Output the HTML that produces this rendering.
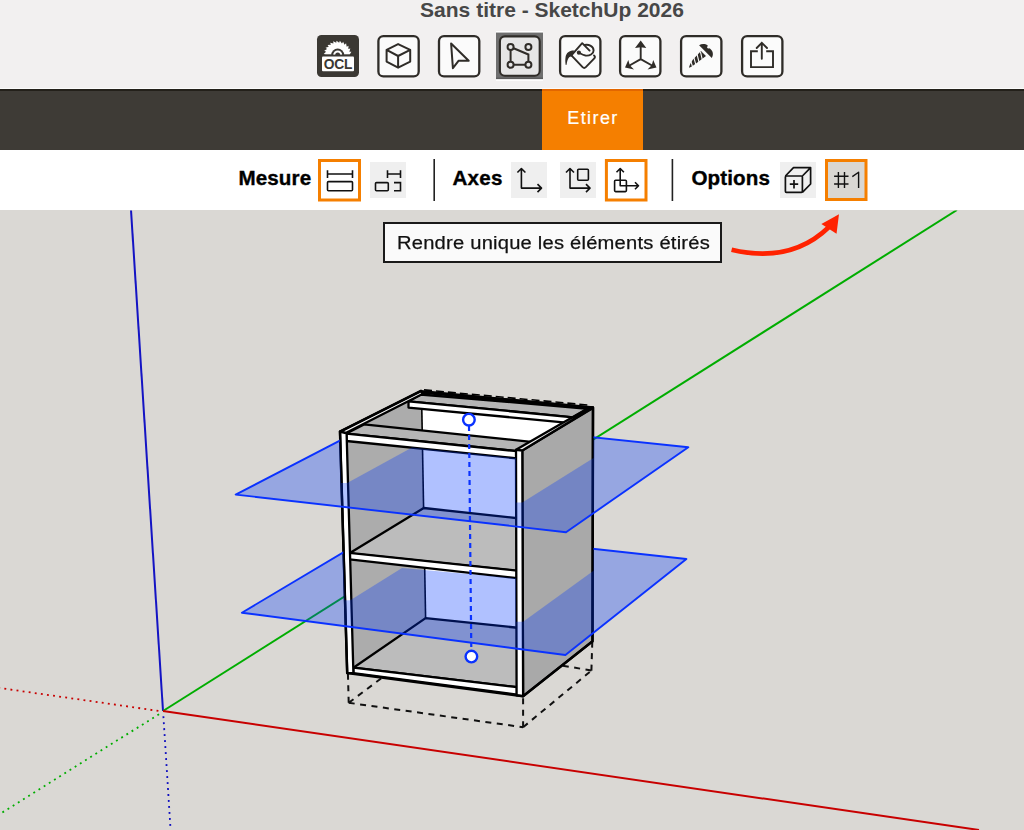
<!DOCTYPE html>
<html><head><meta charset="utf-8">
<style>
html,body{margin:0;padding:0;width:1024px;height:830px;overflow:hidden;background:#dad8d4;font-family:"Liberation Sans",sans-serif;}
#top{position:absolute;left:0;top:0;width:1024px;height:88px;background:#f2f0f0;}
#title{position:absolute;left:0;top:-3px;width:1024px;text-align:center;font-weight:bold;font-size:21px;color:#474747;line-height:26px;padding-left:80px;box-sizing:border-box;}
#line88{position:absolute;left:0;top:88px;width:1024px;height:1px;background:#fbfbfb;}
#dark{position:absolute;left:0;top:89px;width:1024px;height:61px;background:#3e3b36;}
#orange{position:absolute;left:542px;top:89px;width:101px;height:61px;background:#f57f00;color:#fff;font-size:18px;line-height:59px;text-align:center;letter-spacing:1.4px;text-indent:1px;-webkit-text-stroke:0.2px #fff;}
#opts{position:absolute;left:0;top:150px;width:1024px;height:60px;background:#fff;}
.lbl{position:absolute;top:166px;font-weight:bold;font-size:20.6px;line-height:24px;color:#000;-webkit-text-stroke:0.35px #000;}
svg{position:absolute;left:0;top:0;}
#tip{position:absolute;left:383px;top:222px;width:335px;height:37px;border:2px solid #1a1a1a;background:#fafafa;}
#tiptxt{position:absolute;left:396.8px;top:230.5px;font-size:19.2px;line-height:24px;letter-spacing:0.2px;color:#111;white-space:nowrap;transform-origin:0 0;transform:scaleX(1.051);-webkit-text-stroke:0.25px #111;}
</style></head><body>
<div id="top"></div>
<div id="title">Sans titre - SketchUp 2026</div>
<div id="line88"></div>
<div id="dark"></div><div style="position:absolute;left:0;top:89px;width:1024px;height:1.5px;background:#23201a"></div>
<div id="orange">Etirer</div><div style="position:absolute;left:542px;top:89px;width:101px;height:1.5px;background:#e26600"></div>
<div id="opts"></div>
<div class="lbl" style="left:238.5px;letter-spacing:0.1px">Mesure</div>
<div class="lbl" style="left:452.5px;letter-spacing:0.2px">Axes</div>
<div class="lbl" style="left:691.5px;letter-spacing:0.1px">Options</div>

<!-- toolbar icons -->
<svg width="1024" height="90" viewBox="0 0 1024 90">
  <!-- OCL -->
  <rect x="317" y="35" width="42" height="42" rx="4.5" fill="#3b3833"/>
  <path fill="#fff" d="M325.70 54.60 L323.71 54.09 L326.05 51.73 L324.24 50.76 L327.07 49.02 L325.55 47.65 L328.72 46.64 L327.56 44.94 L330.88 44.72 L330.17 42.80 L333.44 43.38 L333.21 41.34 L336.25 42.69 L336.52 40.65 L339.15 42.69 L339.89 40.77 L341.96 43.38 L343.14 41.70 L344.52 44.72 L346.07 43.37 L346.68 46.64 L348.51 45.70 L348.33 49.02 L350.32 48.55 L349.35 51.73 L351.41 51.74 L349.70 54.60 Z"/>
  <path d="M331.2 55 A6.5 6.5 0 0 1 344.2 55 Z" fill="#3b3833"/>
  <path d="M333.2 55 A4.5 4.5 0 0 1 342.2 55 Z" fill="#fff"/>
  <path d="M335.2 55 A2.5 2.5 0 0 1 340.2 55 Z" fill="#3b3833"/>
  <rect x="317" y="54.6" width="42" height="2" fill="#3b3833"/>
  <rect x="322" y="56.6" width="32" height="14.6" rx="1" fill="#fff"/>
  <text x="337.9" y="68.8" font-family="Liberation Sans" font-weight="bold" font-size="13.8" text-anchor="middle" fill="#3b3833" letter-spacing="-0.3">OCL</text>
  <!-- cube -->
  <rect x="378.4" y="36.1" width="40.3" height="40.3" rx="5" fill="#fbfbfb" stroke="#2f2c28" stroke-width="2.3"/>
  <g fill="none" stroke="#2f2c28" stroke-width="2" stroke-linejoin="round">
    <path d="M398.1 44.1 L410.2 49.9 L410.2 61.6 L398.1 67.7 L386.6 61.6 L386.6 49.9 Z M386.6 49.9 L398.1 56 L410.2 49.9 M398.1 56 L398.1 67.7"/>
  </g>
  <!-- select -->
  <rect x="439" y="36.1" width="40.3" height="40.3" rx="5" fill="#fbfbfb" stroke="#2f2c28" stroke-width="2.3"/>
  <path d="M451.1 43.5 L468.7 60.7 L458.7 60.7 L452.9 68.1 Z" fill="none" stroke="#2f2c28" stroke-width="2" stroke-linejoin="round"/>
  <!-- stretch selected -->
  <rect x="496" y="31" width="47" height="1.5" fill="#fff"/><rect x="496" y="32.6" width="47" height="46.6" fill="#6f6f6f"/><rect x="496" y="77.6" width="47" height="1.5" fill="#5c5c5c"/><rect x="496" y="79.4" width="47" height="1.4" fill="#fff"/>
  <rect x="499.9" y="36.4" width="39.8" height="39.4" rx="5" fill="#e6e6e6" stroke="#2f2c28" stroke-width="2.1"/>
  <g fill="#e6e6e6" stroke="#2f2c28" stroke-width="2">
    <path d="M510.6 47 L528.4 54.5 L528.4 64.8 L510.6 64.8 Z" fill="none"/>
    <circle cx="510.6" cy="47" r="3"/><circle cx="528.4" cy="47" r="3"/>
    <circle cx="510.6" cy="64.8" r="3"/><circle cx="528.4" cy="64.8" r="3"/>
  </g>
  <!-- paint -->
  <rect x="560.1" y="36.1" width="40.3" height="40.3" rx="5" fill="#fbfbfb" stroke="#2f2c28" stroke-width="2.3"/>
  <g fill="none" stroke="#2f2c28" stroke-width="1.9" stroke-linejoin="round" stroke-linecap="round">
    <path d="M589.6 50.6 L582.2 43.2 L571.4 55.3 L582.6 67.2 Q584.2 68.8 585.8 67.2 L594.3 58.3 Q595.6 56.8 594 55.4"/>
    <path d="M584.7 45 C589 44.2 593.5 46.5 593.6 50.4 C593.6 54 589.5 56 585.5 55.5 C582.5 55 580.5 53.5 579 52.7"/>
  </g>
  <circle cx="578.9" cy="52.7" r="2.1" fill="#2f2c28"/>
  <path d="M574.2 50.5 C569.5 50.3 566.3 52.6 565.6 56.8 C565.1 59.8 565.3 62.5 565.7 65 L566.6 64.8 C567 61.5 567.6 59 569.2 57.2 C570 56.3 571 56.2 572.2 56.6 Z" fill="#2f2c28"/>
  <!-- axes -->
  <rect x="620.1" y="36.1" width="40.3" height="40.3" rx="5" fill="#fbfbfb" stroke="#2f2c28" stroke-width="2.3"/>
  <g stroke="#2f2c28" stroke-width="1.9" fill="none" stroke-linecap="round">
    <path d="M640.7 59.1 L640.7 46 M640.7 59.1 L629.5 65.5 M640.7 59.1 L652 65.5"/>
  </g>
  <g fill="#2f2c28">
    <path d="M640.7 40.6 L635 48 L640.7 47.2 L646.3 48 Z"/>
    <path d="M625 67.6 L628.3 60 L629.8 65.3 L634 69.5 Z"/>
    <path d="M656.5 67.6 L653.2 60 L651.7 65.3 L647.5 69.5 Z"/>
  </g>
  <!-- screw -->
  <rect x="681.1" y="36.1" width="40.3" height="40.3" rx="5" fill="#fbfbfb" stroke="#2f2c28" stroke-width="2.3"/>
  <path d="M699.1 45.2 C701.5 43.8 705 43.5 707.8 45.6 L707 47.6 C707.5 48.6 708.7 48.7 709.6 48.3 C712.8 50.5 714 54.5 711.8 57.9 Z" fill="#2f2c28"/>
  <path d="M701 51 L706 56 L696 63.5 C693 65.8 690.5 67.5 689 67.8 C689.2 66 690.5 63 693 59.5 Z" fill="#2f2c28"/>
  <g stroke="#fbfbfb" stroke-width="1.1">
    <path d="M692.6 67 L690.5 59.8 M695.8 64.6 L693.7 56.8 M699 62.2 L697 54 M702.3 59.7 L700.4 51.6"/>
  </g>
  <!-- share -->
  <rect x="742.1" y="36.1" width="40.3" height="40.3" rx="5" fill="#fbfbfb" stroke="#2f2c28" stroke-width="2.3"/>
  <g fill="none" stroke="#2f2c28" stroke-width="1.9">
    <path d="M757.8 51.3 L751 51.3 L751 67.1 L773 67.1 L773 51.3 L766.2 51.3"/>
    <path d="M761.8 58.8 L761.8 43 M756.7 48 L761.8 42.8 L767 48" stroke-linecap="round"/>
  </g>
</svg>

<!-- options bar icons -->
<svg width="1024" height="210" viewBox="0 0 1024 210">
  <rect x="319.5" y="160.5" width="40" height="39.5" fill="#fff" stroke="#f57f00" stroke-width="3"/>
  <g fill="none" stroke="#111" stroke-width="1.6">
    <path d="M327.5 170.2 L327.5 178 M352.5 170.2 L352.5 178 M327.5 174 L352.5 174"/>
    <rect x="327.5" y="181.6" width="25" height="9.2" rx="1"/>
  </g>
  <rect x="370" y="162" width="36" height="36" fill="#efefef"/>
  <g fill="none" stroke="#111" stroke-width="1.6">
    <path d="M387.5 170.2 L387.5 178 M400.5 170.2 L400.5 178 M387.5 174 L400.5 174"/>
    <rect x="375.5" y="182.6" width="12.8" height="8.2" rx="1"/>
    <path d="M394 182.6 L400.5 182.6 L400.5 190.8 L394 190.8"/>
  </g>
  <rect x="433.4" y="159" width="1.6" height="42" fill="#222"/>
  <rect x="511" y="162" width="36" height="36" fill="#efefef"/>
  <g fill="none" stroke="#111" stroke-width="1.6" stroke-linejoin="round">
    <path d="M521.4 168.5 L521.4 188.1 L541.5 188.1 M517.4 172.5 L521.4 168.5 L525.4 172.5 M537.5 184.1 L541.5 188.1 L537.5 192.1"/>
  </g>
  <rect x="560" y="162" width="36" height="36" fill="#efefef"/>
  <g fill="none" stroke="#111" stroke-width="1.6" stroke-linejoin="round">
    <path d="M570 168.5 L570 188.1 L590 188.1 M566 172.5 L570 168.5 L574 172.5 M586 184.1 L590 188.1 L586 192.1"/>
    <rect x="577.7" y="169.3" width="10.7" height="10.9" rx="1"/>
  </g>
  <rect x="606.4" y="160.5" width="39.6" height="39.5" fill="#fff" stroke="#f57f00" stroke-width="3"/>
  <g fill="none" stroke="#111" stroke-width="1.6" stroke-linejoin="round">
    <path d="M620.2 168.5 L620.2 185.7 L638.5 185.7 M616.5 172.2 L620.2 168.5 L623.9 172.2 M635 182.2 L638.5 185.7 L635 189.2"/>
    <rect x="614.6" y="180.2" width="11.8" height="11.4" rx="1"/>
  </g>
  <rect x="671.6" y="159" width="1.6" height="42" fill="#222"/>
  <rect x="780" y="162" width="36" height="36" fill="#efefef"/>
  <g fill="none" stroke="#111" stroke-width="1.7" stroke-linejoin="round">
    <rect x="785.4" y="176" width="17" height="16.3" rx="1"/>
    <path d="M785.4 176 L793.5 167.6 L810.6 167.6 L810.6 184 L802.4 192.3 M802.4 176 L810.6 167.6"/>
    <path d="M794 180 L794 188.5 M789.8 184.2 L798.2 184.2"/>
  </g>
  <rect x="826.5" y="160.5" width="39.5" height="39" fill="#d9d7d3" stroke="#f57f00" stroke-width="3"/>
  <g stroke="#111" stroke-width="1.4" fill="none">
    <path d="M838.4 171.9 L838.4 188.1 M844.5 171.9 L844.5 188.1 M834.1 176.2 L848.5 176.2 M834.1 184 L848.5 184"/>
    <path d="M852.3 176.6 L858.6 172.2 L858.6 188.1" stroke-linejoin="round"/>
  </g>
</svg>

<!-- viewport -->
<svg width="1024" height="830" viewBox="0 0 1024 830" style="top:0">
  <defs>
    <clipPath id="vp"><rect x="0" y="210.5" width="1024" height="620"/></clipPath>
    <mask id="m1" maskUnits="userSpaceOnUse" x="0" y="0" width="1024" height="830">
      <rect x="0" y="0" width="1024" height="830" fill="#fff"/>
      <path d="M339.5 431 L421 390.3 L593.5 407 L593.5 458 L522.3 502.5 L516 502.5 L516 458 L412 447.5 L347.2 483 L340.9 483 Z" fill="#000"/>
    </mask>
    <mask id="m2" maskUnits="userSpaceOnUse" x="0" y="0" width="1024" height="830">
      <rect x="0" y="0" width="1024" height="830" fill="#fff"/>
      <path d="M339.5 431 L421 390.3 L593.5 407 L593.5 570.8 L523.1 621.8 L516 621.8 L516 578.3 L402 568 L350.3 600.2 L344.7 600.2 Z" fill="#000"/>
    </mask>
  </defs>
  <g clip-path="url(#vp)">
    <!-- axes -->
    <g stroke-width="2" fill="none">
      <line x1="163" y1="711" x2="131" y2="210" stroke="#1414c4"/>
      <line x1="163" y1="711" x2="957" y2="210" stroke="#00ad00"/>
      <line x1="163" y1="711" x2="979" y2="830" stroke="#c80000"/>
      <line x1="158.4" y1="710.9" x2="0" y2="688" stroke="#c80000" stroke-width="1.8" stroke-dasharray="1.9 4.25"/>
      <line x1="159.05" y1="714.17" x2="0" y2="813.9" stroke="#00ad00" stroke-width="1.8" stroke-dasharray="1.9 4.2"/>
      <line x1="163.4" y1="716.2" x2="170.6" y2="830" stroke="#1010c0" stroke-width="1.8" stroke-dasharray="1.9 4.1"/>
    </g>
    <!-- plinth dashed -->
    <g stroke="#111" stroke-width="2" fill="none" stroke-dasharray="6 5.5" stroke-linecap="butt">
      <path d="M348.7 702.8 L347.9 673"/>
      <path d="M348.7 702.8 L523.1 727.2"/>
      <path d="M348.7 702.8 L383 677"/>
      <path d="M523.1 727.2 L523.1 696"/>
      <path d="M523.1 727.2 L591.4 670.6"/>
      <path d="M591.4 670.6 L592.3 641"/>
      <path d="M591.4 670.6 L562 665.5"/>
    </g>
    <!-- cabinet -->
    <g stroke="#000" stroke-width="2.3" stroke-linejoin="round">
      <!-- silhouette white -->
      <path d="M340 431.6 L421 391.2 L593 407.5 L592.5 641.3 L523.1 696.2 L347.2 673.1 Z" fill="#fff" stroke="none"/>
      <!-- left inner face -->
      <path d="M344 433 L422 394 L421.8 409 L425.6 618.1 L352 668 Z" fill="#acacac" stroke="none"/>
      <path d="M421.8 409 L425.6 618.1" fill="none" stroke-width="1.6"/>
      <!-- shelf top -->
      <path d="M349.5 553.3 L423.75 508 L520 518.5 L520 571.3 Z" fill="#bcbcbc"/>
      <!-- shelf front face -->
      <path d="M349.5 552.9 L517 570.6 L517 578.2 L349.5 559.4 Z" fill="#fff"/>
      <!-- bottom panel top -->
      <path d="M353.4 667.7 L425.6 618.1 L520 628 L520 687.5 Z" fill="#bcbcbc"/>
      <path d="M353.4 667.7 L517 687.2 L517 694.6 L353.4 673.1 Z" fill="#fff"/>
      <!-- back stretcher -->
      <path d="M408.5 401.3 L420.5 394.5 L588 408.8 L573 417.3 Z" fill="#b6b6b6"/>
      <path d="M408.5 401.3 L573 417.3 L566 422.6 L408.5 407.6 Z" fill="#fff"/>
      <!-- front stretcher -->
      <path d="M346.4 433.6 L364 424.4 L531 441.8 L517 451.2 Z" fill="#b6b6b6"/>
      <path d="M346.4 433.6 L517 451.2 L517 458.4 L346.4 441 Z" fill="#fff"/>
      <!-- left panel top strip -->
      <path d="M340 431.6 L421 390.8 L423 393.8 L346.2 432.8 Z" fill="#f4f4f4"/>
      <!-- left front strip -->
      <path d="M340 431.6 L346.6 433.5 L353.4 673.1 L347.2 673.1 Z" fill="#fff"/>
      <!-- right outer face -->
      <path d="M522.3 450.6 L593 408 L592.5 641.3 L523.1 696.2 Z" fill="#a9a9a9"/>
      <!-- right top strip -->
      <path d="M516 449.8 L588.5 408 L593 407.5 L522.3 450.6 Z" fill="#f0f0f0"/>
      <!-- right front strip -->
      <path d="M516 449.8 L522.3 450.6 L523.1 696.2 L516.6 695.4 Z" fill="#fff"/>
      <!-- outer contour -->
      <path d="M340 431.6 L421 391.2 L593 407.5 L592.5 641.3 L523.1 696.2 L347.2 673.1 Z" fill="none" stroke-width="2.5"/>
    </g>
    <!-- dashed top back edge -->
    <path d="M421 392.2 L593 408" stroke="#000" stroke-width="3" fill="none"/>
    <path d="M424 389.9 L588 405" stroke="#000" stroke-width="1.6" stroke-dasharray="8 4" fill="none"/>
    <!-- planes -->
    <g mask="url(#m1)">
      <path d="M235.7 494.6 L566 532.2 L688.3 447.2 L387.6 415.8 Z" fill="rgba(0,55,255,0.31)" stroke="#0a32ff" stroke-width="1.9" stroke-linejoin="round"/>
    </g>
    <g mask="url(#m2)">
      <path d="M241.9 612.7 L565.4 655 L686.4 559 L387 526.4 Z" fill="rgba(0,55,255,0.31)" stroke="#0a32ff" stroke-width="1.9" stroke-linejoin="round"/>
    </g>
    <!-- stretch line -->
    <line x1="469" y1="426" x2="471.3" y2="650" stroke="#0a32ff" stroke-width="2.2" stroke-dasharray="5 4"/>
    <circle cx="468.9" cy="419.7" r="5.8" fill="#fff" stroke="#0a32ff" stroke-width="2.4"/>
    <circle cx="471.4" cy="656.6" r="5.8" fill="#fff" stroke="#0a32ff" stroke-width="2.4"/>
    <!-- red arrow -->
    <path d="M731.6 249.8 C758 256 796 259 829 227" fill="none" stroke="#ff2200" stroke-width="4.6"/>
    <path d="M839 214.3 L821.4 224.1 L836.5 233.7 Z" fill="#ff2200"/>
  </g>
</svg>
<div id="tip"></div>
<div id="tiptxt">Rendre unique les éléments étirés</div>
</body></html>
